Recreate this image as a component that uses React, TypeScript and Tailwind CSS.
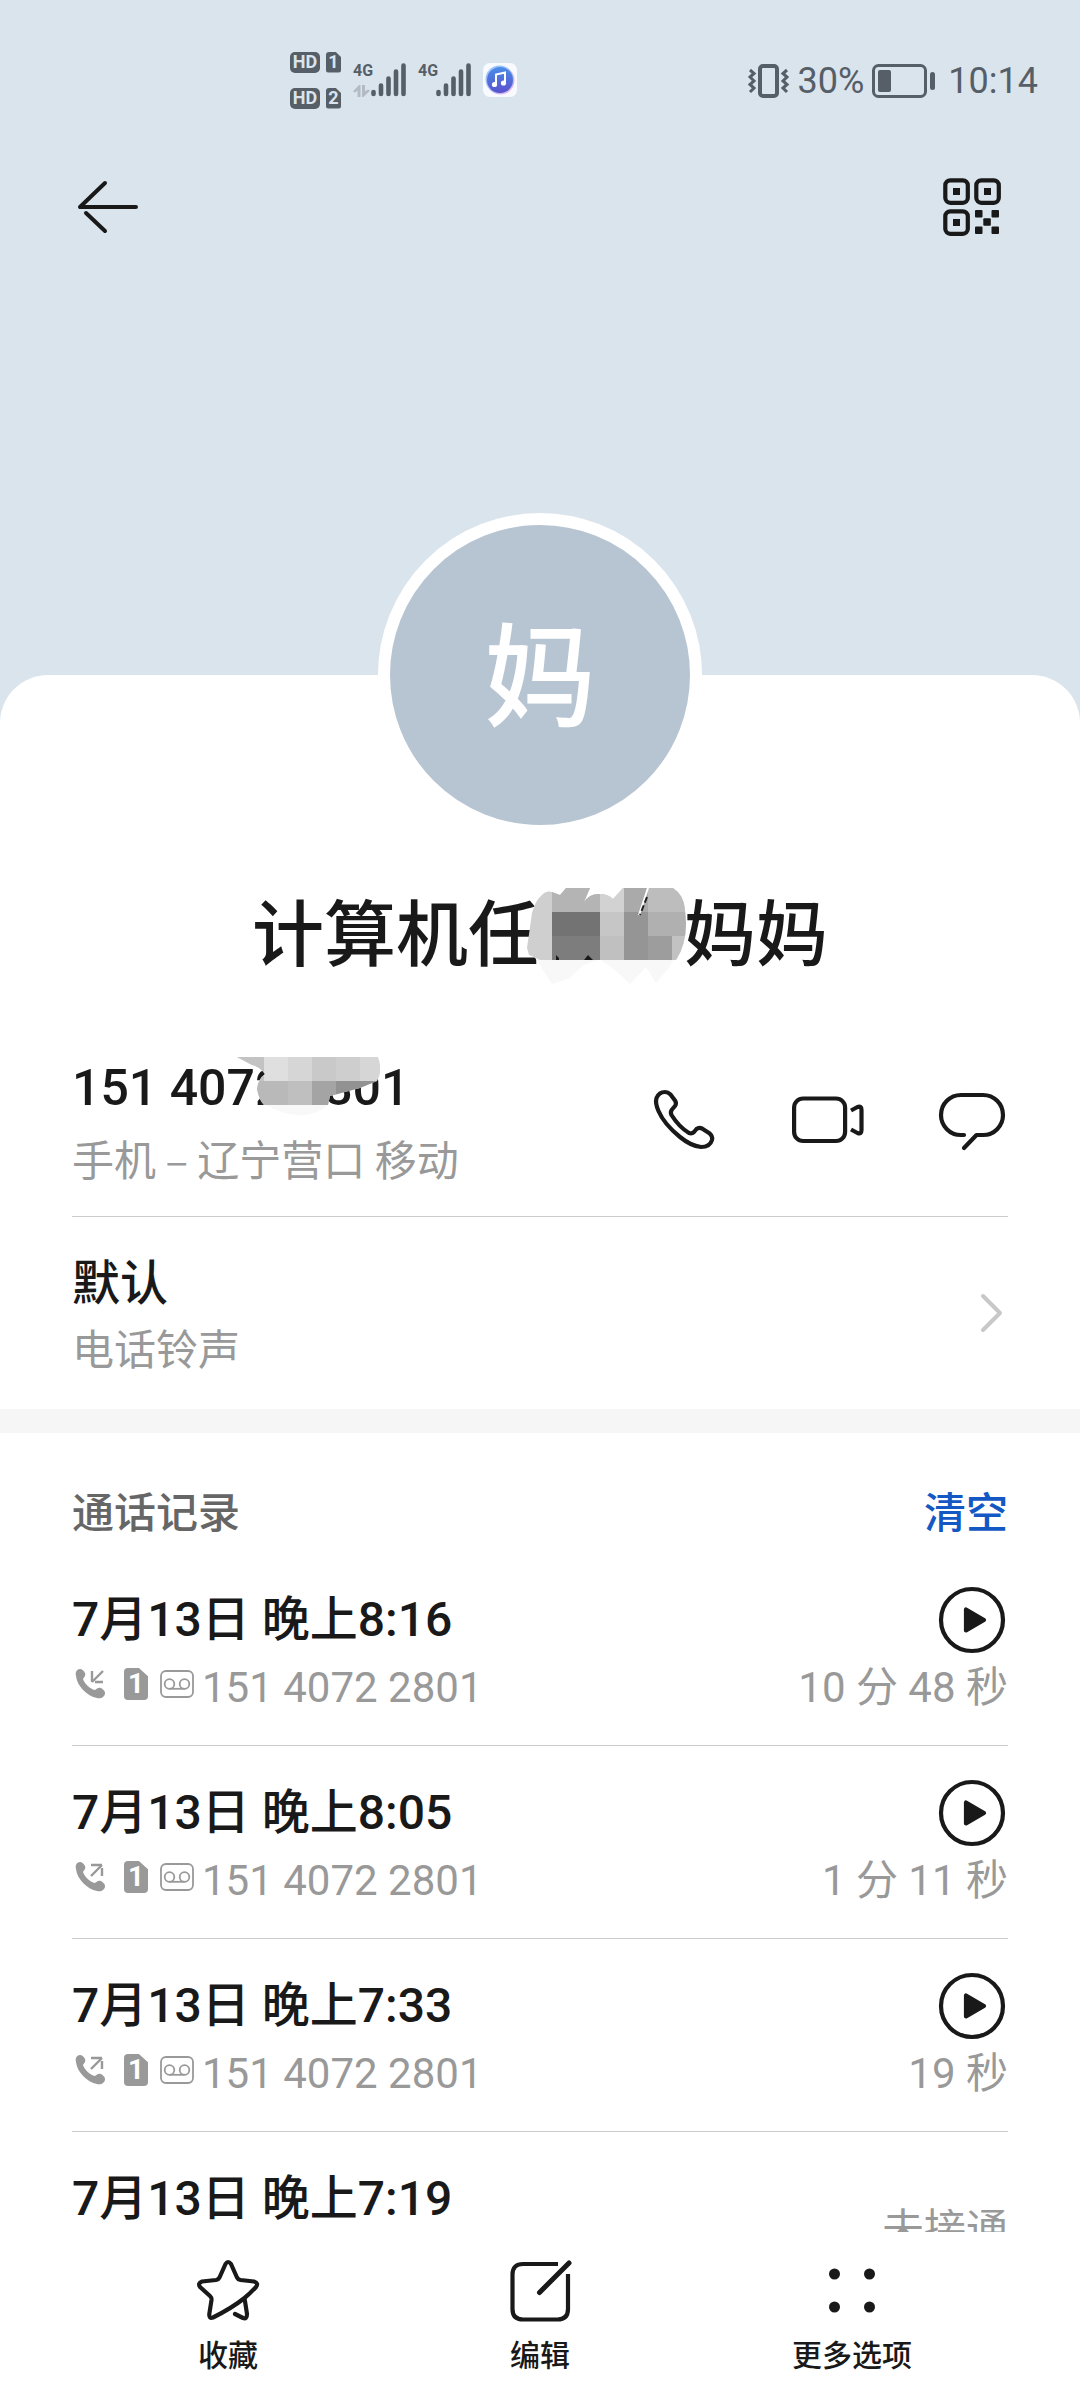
import type { ReactNode } from 'react';

type Call = {
  time: string;
  direction: 'in' | 'out';
  duration?: string;
};

const PHONE = '151 4072 2801';

const CALLS: Call[] = [
  { time: '7月13日 晚上8:16', direction: 'in', duration: '10 分 48 秒' },
  { time: '7月13日 晚上8:05', direction: 'out', duration: '1 分 11 秒' },
  { time: '7月13日 晚上7:33', direction: 'out', duration: '19 秒' },
  { time: '7月13日 晚上7:19', direction: 'out' },
];

function Icon({ children }: { children: ReactNode }) {
  return (
    <svg
      viewBox="0 0 72 72"
      className="size-18"
      fill="none"
      stroke="currentColor"
      strokeWidth="4.2"
      strokeLinecap="round"
      strokeLinejoin="round"
      aria-hidden="true"
    >
      {children}
    </svg>
  );
}

function SimBadge({ children, className }: { children: ReactNode; className: string }) {
  return (
    <span
      className={`flex items-center justify-center font-[Roboto,sans-serif] font-bold [clip-path:polygon(0_0,62%_0,100%_26%,100%_100%,0_100%)] ${className}`}
    >
      {children}
    </span>
  );
}

function HdSim({ slot }: { slot: number }) {
  return (
    <div className="flex items-center gap-1.5">
      <span className="flex h-[21px] w-[30px] items-center justify-center rounded-[5px] bg-[#565e67] font-[Roboto,sans-serif] text-[18px] leading-none font-bold text-[#dae4ed]">
        HD
      </span>
      <SimBadge className="h-[21px] w-[15px] rounded-[3px] bg-[#565e67] text-[18px] leading-none text-[#dae4ed]">
        {slot}
      </SimBadge>
    </div>
  );
}

function Signal({ data }: { data?: boolean }) {
  return (
    <div className="flex h-[34px] w-[53px] items-start">
      <div className="flex h-full w-[18px] flex-col justify-between">
        <span className="font-[Roboto,sans-serif] text-base leading-4 font-bold">4G</span>
        {data && (
          <svg viewBox="0 0 17 12" className="h-3 w-[17px]" fill="#b3bac3" aria-hidden="true">
            <path d="M0 6.500 6 0h1.500v12H4.500V5.500L2 7.500zM9 0h3v6.500L15 4.500l2 1L10.500 12H9z" />
          </svg>
        )}
      </div>
      <svg viewBox="0 0 35 34" className="h-[34px] w-[35px]" stroke="#565e67" strokeWidth="4.6" strokeLinecap="round">
        <path d="M2.500 29v2M10 22.500v8.500M17.500 15.500v15.500M25 8.500v22.500M32.500 2.500v28.500" />
      </svg>
    </div>
  );
}

function StatusBar() {
  return (
    <div className="flex h-40 items-center justify-between pr-[42px] pl-[290px] text-[#565e67]">
      <div className="flex items-center gap-3">
        <div className="flex flex-col gap-[15px]">
          <HdSim slot={1} />
          <HdSim slot={2} />
        </div>
        <Signal data />
        <Signal />
        <svg viewBox="0 0 34 34" className="size-[34px]" aria-hidden="true">
          <defs>
            <linearGradient id="music" x1="0" y1="0" x2="0" y2="1">
              <stop offset="0" stopColor="#4b8ee8" />
              <stop offset="1" stopColor="#5a50cc" />
            </linearGradient>
          </defs>
          <rect width="34" height="34" rx="7" fill="#f8faff" />
          <circle cx="17.500" cy="17.500" r="14" fill="#e6b3e6" />
          <circle cx="16.500" cy="16.500" r="14" fill="#9cc4fb" />
          <circle cx="17" cy="17" r="13" fill="url(#music)" />
          <path d="M13 21.500V11.500L22 9.500V20" fill="none" stroke="#fff" strokeWidth="2" />
          <circle cx="11.500" cy="21.500" r="2.600" fill="#fff" />
          <circle cx="20.500" cy="20" r="2.600" fill="#fff" />
        </svg>
      </div>
      <div className="flex items-center pt-0.5 font-[Roboto,sans-serif] text-4xl leading-none">
        <svg viewBox="0 0 42 34" className="h-[34px] w-[42px]" fill="none" stroke="currentColor" aria-hidden="true">
          <rect x="12" y="2" width="17" height="30" rx="3" strokeWidth="4" />
          <path d="m2 6 4 3.500-4 3.500 4 4-4 3.500 4 3.500-4 4M39 6l-4 3.500 4 3.500-4 4 4 3.500-4 3.500 4 4" strokeWidth="3" />
        </svg>
        <span className="ml-2">30%</span>
        <svg viewBox="0 0 64 34" className="ml-2 h-[34px] w-16" fill="currentColor" aria-hidden="true">
          <rect x="1.500" y="1.500" width="52" height="31" rx="5" fill="none" stroke="currentColor" strokeWidth="3" />
          <rect x="6" y="6" width="13" height="22" rx="2" />
          <rect x="58" y="8" width="5" height="18" rx="2.500" />
        </svg>
        <span className="ml-3">10:14</span>
      </div>
    </div>
  );
}

function Toolbar() {
  return (
    <div className="flex items-center justify-between px-18 pt-2.5">
      <button aria-label="返回">
        <Icon>
          <path d="M8 37h56M8 37l25-24M14 43l19 18" strokeWidth="4" />
        </Icon>
      </button>
      <button aria-label="二维码">
        <Icon>
          <rect x="9.300" y="10.300" width="22.500" height="22.500" rx="5" />
          <rect x="40.300" y="10.300" width="22.500" height="22.500" rx="5" />
          <rect x="9.300" y="41.300" width="22.500" height="22.500" rx="5" />
          <g fill="currentColor" stroke="none">
            <path d="M17 18h7v7h-7zM48 18h7v7h-7zM17 49h7v7h-7z" />
            <rect x="39" y="40" width="7.500" height="7.500" rx="1" />
            <rect x="55.500" y="40" width="7.500" height="7.500" rx="1" />
            <rect x="47.300" y="48.300" width="7.500" height="7.500" rx="1" />
            <rect x="39" y="56.500" width="7.500" height="7.500" rx="1" />
            <rect x="55.500" y="56.500" width="7.500" height="7.500" rx="1" />
          </g>
        </Icon>
      </button>
    </div>
  );
}

/* pixelated smear over part of the name */
function NameMosaic() {
  return (
    <svg viewBox="0 0 168 102" className="absolute top-2 -left-4 h-[102px] w-[168px]" aria-hidden="true">
      <defs>
        <clipPath id="name-smear">
          <path d="M5 70 3 63 8 28Q12 15 16 12 22 5 28 7L36 10 42 3H66L60 17Q66 8 76 9 84 9 89 14L99 3H149Q160 10 161 25L162 38Q162 60 152 75H16L10 72Z" />
        </clipPath>
      </defs>
      <path d="M4 62 28 99 44 94 60 80 76 74 92 86 106 99 122 82 132 98 144 84 152 70Z" fill="#f8f8f8" />
      <g clipPath="url(#name-smear)">
        <path d="M0 0h168v78H0z" fill="#cfcfcf" />
        <path d="M28 3h48v24H28z" fill="#b4b4b4" />
        <path d="M76 3h24v24H76z" fill="#d2d2d2" />
        <path d="M100 3h24v24h-24z" fill="#aaa" />
        <path d="M124 3h44v24h-44z" fill="#bdbdbd" />
        <path d="M28 27h48v24H28z" fill="#737373" />
        <path d="M76 27h24v24H76z" fill="#c6c6c6" />
        <path d="M100 27h24v24h-24z" fill="#959595" />
        <path d="M124 27h44v24h-44z" fill="#b0b0b0" />
        <path d="M28 51h48v24H28z" fill="#7d7d7d" />
        <path d="M76 51h24v24H76z" fill="#c0c0c0" />
        <path d="M100 51h24v24h-24z" fill="#959595" />
        <path d="M124 51h24v24h-24z" fill="#9d9d9d" />
        <path d="M148 51h20v24h-20z" fill="#c2c2c2" />
        <path d="M124 3 115 30" stroke="#fff" strokeWidth="2" />
        <path d="M123 12 116 30" stroke="#222" strokeWidth="2" strokeDasharray="6 3" />
        <path d="m60 75 4-5 5 5zM32 75v-5l3 3v2z" fill="#1a1a1a" />
      </g>
    </svg>
  );
}

function NumberMosaic() {
  return (
    <svg viewBox="0 0 148 62" className="absolute top-1 left-40 h-[62px] w-[148px]" aria-hidden="true">
      <defs>
        <clipPath id="number-smear">
          <path d="M5 2H146Q151 16 145 26L128 33 98 41 96 50H32Q27 45 25 34 26 24 33 19 27 11 20 10Z" />
        </clipPath>
      </defs>
      <path d="M34 50h62q-8 8-24 10-22 0-38-10z" fill="#f8f8f8" />
      <g clipPath="url(#number-smear)">
        <path d="M0 0h148v62H0z" fill="#d6d6d6" />
        <path d="M0 2h32v24H0z" fill="#c3c3c3" />
        <path d="M32 2h24v24H32z" fill="#dfdfdf" />
        <path d="M80 2h24v24H80z" fill="#c9c9c9" />
        <path d="M104 2h24v24h-24z" fill="#cecece" />
        <path d="M0 26h56v24H0z" fill="#b9b9b9" />
        <path d="M56 26h24v24H56z" fill="#bfbfbf" />
        <path d="M80 26h24v24H80z" fill="#a4a4a4" />
        <path d="M104 26h44v24h-44z" fill="#929292" />
      </g>
    </svg>
  );
}

function CallRow({ call }: { call: Call }) {
  return (
    <li className="flex h-[193px] items-start justify-between border-b border-[#cbcbcb] font-[Roboto,'Noto_Sans_CJK_SC',sans-serif]">
      <div className="pt-[33px]">
        <div className="text-5xl leading-[68px] font-medium">{call.time}</div>
        {call.duration && (
          <div className="flex items-center gap-2 text-[42px] leading-[68px] text-[#999]">
            <div className="mb-2 flex items-center gap-3">
              <svg viewBox="0 0 40 36" className="h-9 w-10" fill="none" stroke="currentColor" strokeWidth="2.4" aria-hidden="true">
                <path
                  d="M4 10C3 6 5 3 8 3c2 0 4 2 5 4 1 3-1 4-2 6 1 4 7 10 12 11 2-1 3-3 6-2 2 1 4 3 4 5 0 4-4 6-8 5C15 30 5 20 4 10z"
                  fill="currentColor"
                  stroke="none"
                />
                {call.direction === 'in' ? (
                  <path d="M31 5 20 16M20 5v11M23 16h8" />
                ) : (
                  <path d="M19 17 30 6M19 6h11M30 9v8" />
                )}
              </svg>
              <SimBadge className="h-8 w-6 rounded-[4px] bg-[#999] text-[28px] leading-none text-white">1</SimBadge>
              <svg viewBox="0 0 34 28" className="h-7 w-[34px]" fill="none" stroke="currentColor" strokeWidth="1.8" aria-hidden="true">
                <rect x="1" y="1" width="32" height="26" rx="5" />
                <circle cx="9.500" cy="14" r="4.800" />
                <circle cx="24.500" cy="14" r="4.800" />
                <path d="M9.500 18.800h15" />
              </svg>
            </div>
            <span>{PHONE}</span>
          </div>
        )}
      </div>
      {call.duration ? (
        <div className="flex flex-col items-end pt-[33px]">
          <button aria-label="播放录音" className="-my-0.5">
            <Icon>
              <circle cx="36" cy="36" r="31" />
              <path d="M30 25.500v21L48 36z" fill="currentColor" />
            </Icon>
          </button>
          <span className="text-[42px] leading-[68px] text-[#999]">{call.duration}</span>
        </div>
      ) : (
        <span className="self-center pt-1 text-[42px] leading-[60px] text-[#999]">未接通</span>
      )}
    </li>
  );
}

export default function App() {
  return (
    <div className="flex h-screen flex-col bg-[#dae4ed] font-['Noto_Sans_CJK_SC',sans-serif] text-[#191919]">
      <main className="min-h-0 flex-1 overflow-hidden">
        <StatusBar />
        <Toolbar />

        <section className="mt-[433px] rounded-t-[48px] bg-white">
          <div className="flex flex-col items-center">
            <div className="-mt-[162px] flex size-[324px] items-center justify-center rounded-full border-12 border-white bg-[#b7c4d2] pb-3 text-[112px] leading-none font-medium text-white">
              妈
            </div>
            <h1 className="mt-10 flex h-[104px] items-center text-7xl leading-[104px] font-medium">
              计算机任
              <span className="relative h-full w-36">
                <NameMosaic />
              </span>
              妈妈
            </h1>
          </div>

          <div className="px-18">
            <div className="mt-10 flex items-center justify-between border-b border-[#cbcbcb] pt-[30px] pb-[25px]">
              <div>
                <div className="relative font-[Roboto,sans-serif] text-[50px] leading-[74px] font-medium">
                  {PHONE}
                  <NumberMosaic />
                </div>
                <div className="text-[42px] leading-[66px] text-[#999]">手机 – 辽宁营口 移动</div>
              </div>
              <div className="mb-0.5 flex gap-18">
                <button aria-label="拨打电话">
                  <Icon>
                    <path d="M17 8C20 8 21 9 22.500 10.500L27 16.500Q29 19.500 27 22L24 25.500Q22 28 23.500 31 31 43 41 49 44 50 46 48L48.500 45Q51 43 54 44.500L61 49Q65 52 64 56 62 63 53 63 43 62 32 53 16 40 10.500 27 7 19 8.500 14 11 8 17 8Z" />
                  </Icon>
                </button>
                <button aria-label="视频通话">
                  <Icon>
                    <rect x="2.100" y="14.500" width="51" height="42.500" rx="9" />
                    <path d="M59 26.500 65.500 23Q69.500 21.500 69.500 26V46Q69.500 50.500 65.500 49L59 45.500" strokeLinecap="butt" />
                  </Icon>
                </button>
                <button aria-label="发信息">
                  <Icon>
                    <path d="M28 51H25A20 20 0 0 1 25 11H47A20 20 0 0 1 47 51H40.500L28 64" />
                  </Icon>
                </button>
              </div>
            </div>

            <button className="flex w-full items-center justify-between py-7 text-left">
              <span className="flex flex-col">
                <span className="text-5xl leading-[68px] font-medium">默认</span>
                <span className="text-[42px] leading-[68px] text-[#999]">电话铃声</span>
              </span>
              <svg viewBox="0 0 36 48" className="h-12 w-9" fill="none" stroke="#c8c8c8" strokeWidth="4" strokeLinecap="round" strokeLinejoin="round" aria-hidden="true">
                <path d="m11 7 17 17-17 17" />
              </svg>
            </button>
          </div>
        </section>

        <section className="border-t-24 border-[#f6f6f6] bg-white px-18">
          <div className="flex h-[120px] items-end justify-between text-[42px] leading-[86px] font-medium">
            <h2 className="text-[#666]">通话记录</h2>
            <button className="text-[#1458c4]">清空</button>
          </div>
          <ul>
            {CALLS.map((call) => (
              <CallRow key={call.time} call={call} />
            ))}
          </ul>
        </section>
      </main>

      <nav className="grid h-42 shrink-0 grid-cols-3 bg-white px-18 pt-[22px] text-3xl leading-[54px] font-medium">
        <button className="flex flex-col items-center">
          <Icon>
            <path d="M52.500 44Q40 54 21 63.500 17 65 17.300 60L19.500 46Q19.700 43.500 18 42L8 33Q5.500 29 10 27.500L24 26Q26.500 25.500 27.500 23.500L33.500 10Q36 6 39 10L45 23.500Q46 25.500 48.500 26L62 27.500Q67 29 64 33 58 39.500 52.500 44L55 60Q55 65.500 51 64L43 60" />
          </Icon>
          收藏
        </button>
        <button className="flex flex-col items-center">
          <Icon>
            <path d="M54 10H19Q8.500 10 8.500 20.500V55Q8.500 65.500 19 65.500H53.500Q64 65.500 64 55V20" strokeLinecap="butt" />
            <path d="M65 9 35.500 38.500" strokeWidth="5" />
          </Icon>
          编辑
        </button>
        <button className="flex flex-col items-center">
          <Icon>
            <g fill="currentColor" stroke="none">
              <circle cx="18.500" cy="20" r="5.500" />
              <circle cx="53.500" cy="20" r="5.500" />
              <circle cx="18.500" cy="53" r="5.500" />
              <circle cx="53.500" cy="53" r="5.500" />
            </g>
          </Icon>
          更多选项
        </button>
      </nav>
    </div>
  );
}
